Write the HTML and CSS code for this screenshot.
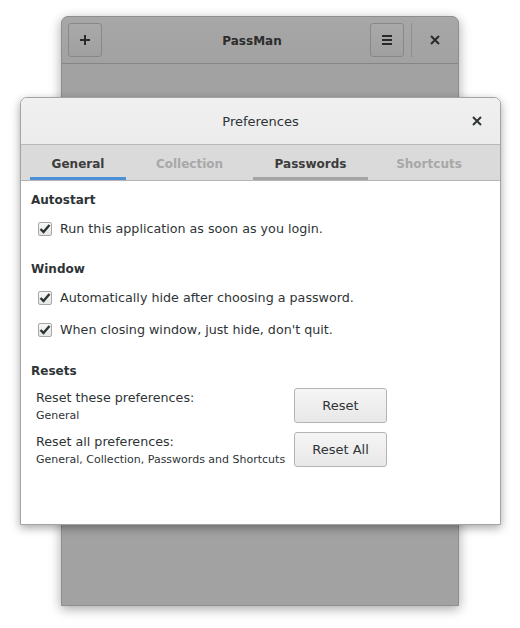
FILE: index.html
```html
<!DOCTYPE html>
<html>
<head>
<meta charset="utf-8">
<link rel="stylesheet" href="styles.css">
</head>
<body>
<div class="desktop">
  <div class="mainwin">
    <div class="main-header">
      <button class="hbtn"><svg width="14" height="14" viewBox="0 0 14 14"><path d="M7 2v10M2 7h10" stroke="#2a2a2a" stroke-width="2"/></svg></button>
      <div class="main-title">PassMan</div>
      <button class="hbtn"><svg width="14" height="14" viewBox="0 0 14 14"><path d="M2 3h10M2 7h10M2 11h10" stroke="#2a2a2a" stroke-width="2"/></svg></button>
      <div class="vsep"></div>
      <div class="hclose"><svg width="10" height="10" viewBox="0 0 10 10"><path d="M1 1l8 8M9 1l-8 8" stroke="#2a2a2a" stroke-width="2"/></svg></div>
    </div>
    <div class="main-body"></div>
  </div>

  <div class="dialog">
    <div class="dlg-header">
      <div class="dlg-title">Preferences</div>
      <div class="dlg-close"><svg width="10" height="10" viewBox="0 0 10 10"><path d="M1 1l8 8M9 1l-8 8" stroke="#2e3436" stroke-width="2"/></svg></div>
    </div>
    <div class="tabs">
      <div class="tab active">General</div>
      <div class="tab dim">Collection</div>
      <div class="tab hover">Passwords</div>
      <div class="tab dim">Shortcuts</div>
    </div>
    <div class="content">
      <div class="section-title">Autostart</div>
      <label class="check"><span class="box"><svg width="12" height="10" viewBox="0 0 12 10"><path d="M1.5 5l3 3 6-7" fill="none" stroke="#2e3436" stroke-width="2.4"/></svg></span>Run this application as soon as you login.</label>

      <div class="section-title sec2">Window</div>
      <label class="check"><span class="box"><svg width="12" height="10" viewBox="0 0 12 10"><path d="M1.5 5l3 3 6-7" fill="none" stroke="#2e3436" stroke-width="2.4"/></svg></span>Automatically hide after choosing a password.</label>
      <label class="check c2"><span class="box"><svg width="12" height="10" viewBox="0 0 12 10"><path d="M1.5 5l3 3 6-7" fill="none" stroke="#2e3436" stroke-width="2.4"/></svg></span>When closing window, just hide, don't quit.</label>

      <div class="section-title sec3">Resets</div>
      <div class="reset-row">
        <div class="reset-text">
          <div class="reset-label">Reset these preferences:</div>
          <div class="reset-sub">General</div>
        </div>
        <button class="btn">Reset</button>
      </div>
      <div class="reset-row r2">
        <div class="reset-text">
          <div class="reset-label">Reset all preferences:</div>
          <div class="reset-sub">General, Collection, Passwords and Shortcuts</div>
        </div>
        <button class="btn">Reset All</button>
      </div>
    </div>
  </div>
</div>
</body>
</html>
```
FILE: styles.css
```css
* { box-sizing: border-box; }
html, body { margin: 0; padding: 0; }
body {
  width: 520px;
  height: 628px;
  background: #ffffff;
  font-family: "DejaVu Sans", sans-serif;
  color: #2e3436;
  overflow: hidden;
}
.desktop { position: relative; width: 520px; height: 628px; }

.mainwin {
  position: absolute;
  left: 61px;
  top: 16px;
  width: 398px;
  height: 590px;
  border-radius: 7px 7px 0 0;
  box-shadow: 0 3px 12px rgba(0,0,0,0.35);
  background: #a2a2a2;
  display: flex;
  flex-direction: column;
  overflow: hidden;
  border: 1px solid #8e8e8e;
}
.main-header {
  height: 47px;
  background: linear-gradient(#a7a7a7, #a2a2a2);
  border-bottom: 1px solid #858585;
  display: flex;
  align-items: center;
  padding: 0 0 0 6px;
  position: relative;
}
.hbtn {
  width: 34px;
  height: 34px;
  border: 1px solid #888888;
  border-radius: 3px;
  background: linear-gradient(#a9a9a9, #a0a0a0);
  display: flex;
  align-items: center;
  justify-content: center;
  padding: 0;
}
.main-title {
  flex: 1;
  text-align: center;
  font-weight: bold;
  font-size: 12px;
  color: #2d2d2d;
  padding-left: 32px;
  padding-top: 2px;
}
.vsep { width: 1px; height: 34px; background: #8e8e8e; margin: 0 0 0 7px; }
.hclose { width: 46px; display: flex; justify-content: center; align-items: center; }
.main-body { flex: 1; background: #a2a2a2; }

.dialog {
  position: absolute;
  left: 20px;
  top: 97px;
  width: 481px;
  height: 428px;
  border: 1px solid #a3a3a3;
  border-radius: 7px 7px 0 0;
  background: #ffffff;
  box-shadow: 0 3px 10px rgba(0,0,0,0.35);
  display: flex;
  flex-direction: column;
  overflow: hidden;
}
.dlg-header {
  height: 47px;
  background: linear-gradient(#f0f0f0, #ececec);
  border-bottom: 1px solid #b8b8b8;
  display: flex;
  align-items: center;
  position: relative;
}
.dlg-title {
  flex: 1;
  text-align: center;
  font-size: 13px;
  color: #2e3436;
}
.dlg-close {
  position: absolute;
  right: 18px;
  top: 18px;
  display: flex;
}
.tabs {
  height: 36px;
  background: #dadada;
  border-bottom: 1px solid #b6b6b6;
  display: grid;
  grid-template-columns: 96px 127px 115px 122px;
  padding-left: 9px;
}
.tab {
  display: flex;
  align-items: center;
  justify-content: center;
  font-size: 12px;
  font-weight: bold;
  color: #3c3c3c;
  border-bottom: 3px solid transparent;
  padding-top: 5px;
}
.tab.active { border-bottom-color: #4a90d9; }
.tab.hover { border-bottom-color: #a4a4a4; }
.tab.dim { color: #a8a8a8; }

.content {
  flex: 1;
  padding: 11px 10px 0 10px;
  font-size: 12.7px;
}
.section-title {
  font-weight: bold;
  font-size: 12px;
  height: 16px;
  line-height: 16px;
}
.sec2 { margin-top: 24px; }
.sec3 { margin-top: 25px; }
.check {
  display: flex;
  align-items: center;
  margin-top: 13px;
  margin-left: 7px;
  height: 16px;
  line-height: 16px;
}
.check.c2 { margin-top: 16px; }
.box {
  width: 14px;
  height: 14px;
  border: 1px solid #a7a7a7;
  border-radius: 2px;
  background: linear-gradient(#f7f7f7, #e6e6e6);
  display: flex;
  align-items: center;
  justify-content: center;
  margin-right: 8px;
}
.reset-row {
  display: flex;
  align-items: center;
  margin-top: 9px;
  padding-left: 5px;
}
.reset-row.r2 { margin-top: 9px; }
.reset-text { width: 258px; }
.reset-label { font-size: 12.7px; line-height: 17px; }
.reset-sub { font-size: 11px; line-height: 14px; margin-top: 3px; }
.btn {
  width: 93px;
  height: 35px;
  border: 1px solid #b4b4b4;
  border-radius: 3px;
  background: linear-gradient(#f5f5f5, #e8e8e8);
  font-family: "DejaVu Sans", sans-serif;
  font-size: 13px;
  color: #2e3436;
  padding: 0;
}
```
